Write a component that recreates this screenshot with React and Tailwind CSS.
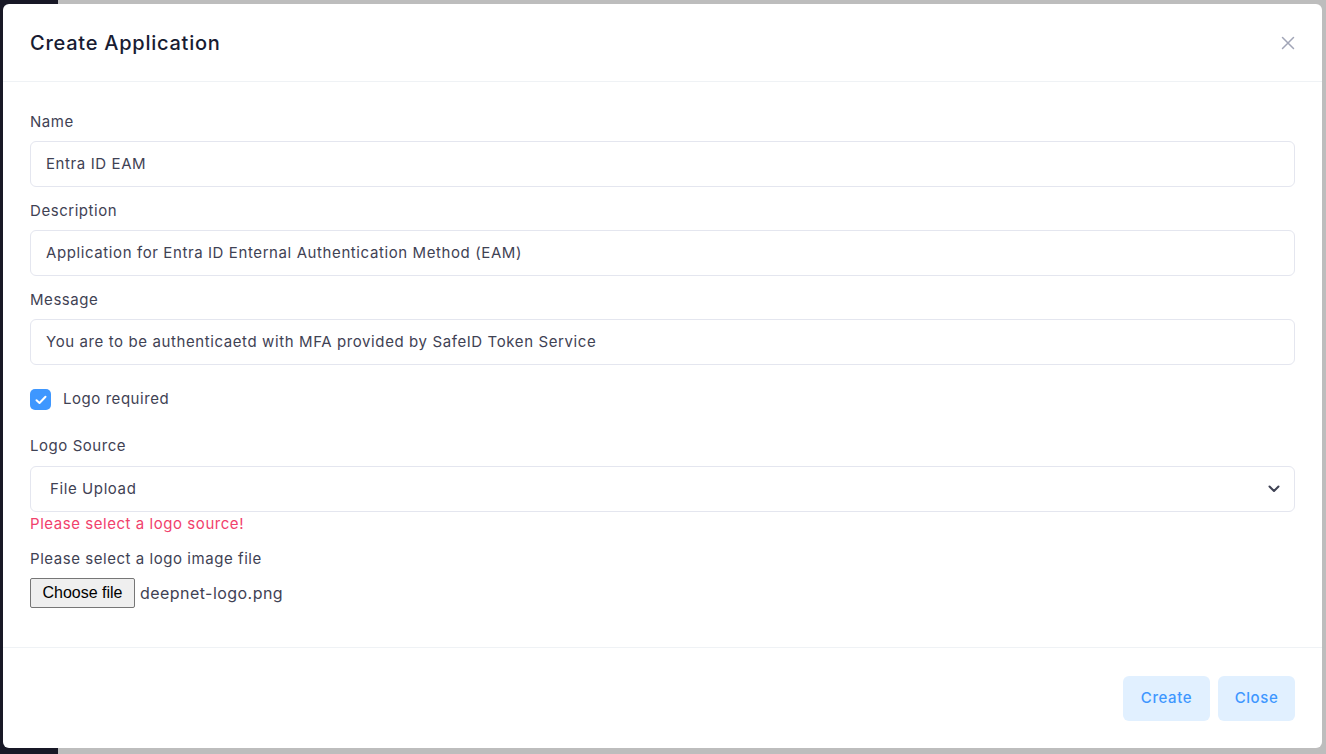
export default function App() {
  const font = { fontFamily: 'Inter, "Noto Sans", sans-serif' };
  const label = "h-[22px] text-[15px] leading-[22px] tracking-[0.55px] text-[#3f4254]";
  const input =
    "h-[46px] w-full rounded-[6px] border border-[#e4e6ef] bg-white px-[15px] flex items-center text-[15px] tracking-[0.6px] text-[#3f4254]";
  return (
    <div className="relative h-[754px] w-[1326px] overflow-hidden bg-[#bdbdbd]" style={font}>
      <div className="absolute left-0 top-0 bottom-0 w-[58px] bg-[#181826]" />
      <div className="absolute left-[3px] top-[4px] w-[1319px] h-[744px] rounded-[6px] bg-white flex flex-col">
        <div className="h-[78px] shrink-0 border-b border-[#eff2f5] flex items-center justify-between px-[27px]">
          <h2 className="text-[20px] font-medium tracking-[0.75px] text-[#181c32] leading-none">Create Application</h2>
          <svg width="14" height="14" viewBox="0 0 14 14">
            <path d="M1.5 1.5 L12.5 12.5 M12.5 1.5 L1.5 12.5" stroke="#a1a5b7" strokeWidth="1.5" strokeLinecap="round" />
          </svg>
        </div>
        <div className="flex-1 px-[27px] pt-[29px] flex flex-col">
          <div className={label}>Name</div>
          <div className={input + " mt-[8px]"}>Entra ID EAM</div>
          <div className={label + " mt-[13px]"}>Description</div>
          <div className={input + " mt-[8px]"}>Application for Entra ID Enternal Authentication Method (EAM)</div>
          <div className={label + " mt-[13px]"}>Message</div>
          <div className={input + " mt-[8px]"}>You are to be authenticaetd with MFA provided by SafeID Token Service</div>
          <div className="mt-[24px] flex items-center h-[21px]">
            <div className="w-[21px] h-[21px] rounded-[5px] bg-[#3e97ff] flex items-center justify-center">
              <svg width="12" height="10" viewBox="0 0 12 10">
                <path d="M1.5 5.2 L4.5 8 L10.5 1.8" stroke="white" strokeWidth="2" fill="none" strokeLinecap="round" strokeLinejoin="round" />
              </svg>
            </div>
            <span className="ml-[12px] text-[15px] tracking-[0.55px] text-[#3f4254]">Logo required</span>
          </div>
          <div className={label + " mt-[25px]"}>Logo Source</div>
          <div className={input + " mt-[9px] justify-between pl-[19px] pr-[14px]"}>
            <span>File Upload</span>
            <svg width="12" height="8" viewBox="0 0 12 8">
              <path d="M1.5 1.5 L6 6 L10.5 1.5" stroke="#3f4254" strokeWidth="2" fill="none" strokeLinecap="round" strokeLinejoin="round" />
            </svg>
          </div>
          <div className="mt-[1px] h-[22px] text-[15px] leading-[22px] tracking-[0.55px] text-[#f1416c]">Please select a logo source!</div>
          <div className={label + " mt-[13px]"}>Please select a logo image file</div>
          <div className="mt-[8px] flex items-center h-[30px]">
            <div
              className="h-[30px] w-[105px] flex items-center justify-center border border-[#767676] rounded-[2px] bg-[#efefef] text-[16px] text-black"
              style={{ fontFamily: '"Liberation Sans", Arial, sans-serif' }}
            >
              Choose file
            </div>
            <span className="ml-[5px] text-[16px] tracking-[0.45px] text-[#3f4254]">deepnet-logo.png</span>
          </div>
        </div>
        <div className="h-[101px] shrink-0 border-t border-[#eff2f5] flex items-center justify-end gap-[8px] px-[27px]">
          <button className="h-[45px] w-[87px] rounded-[6px] bg-[#e1f0ff] text-[#3e97ff] text-[15px] tracking-[0.6px] font-medium">Create</button>
          <button className="h-[45px] w-[77px] rounded-[6px] bg-[#e1f0ff] text-[#3e97ff] text-[15px] tracking-[0.6px] font-medium">Close</button>
        </div>
      </div>
    </div>
  );
}
